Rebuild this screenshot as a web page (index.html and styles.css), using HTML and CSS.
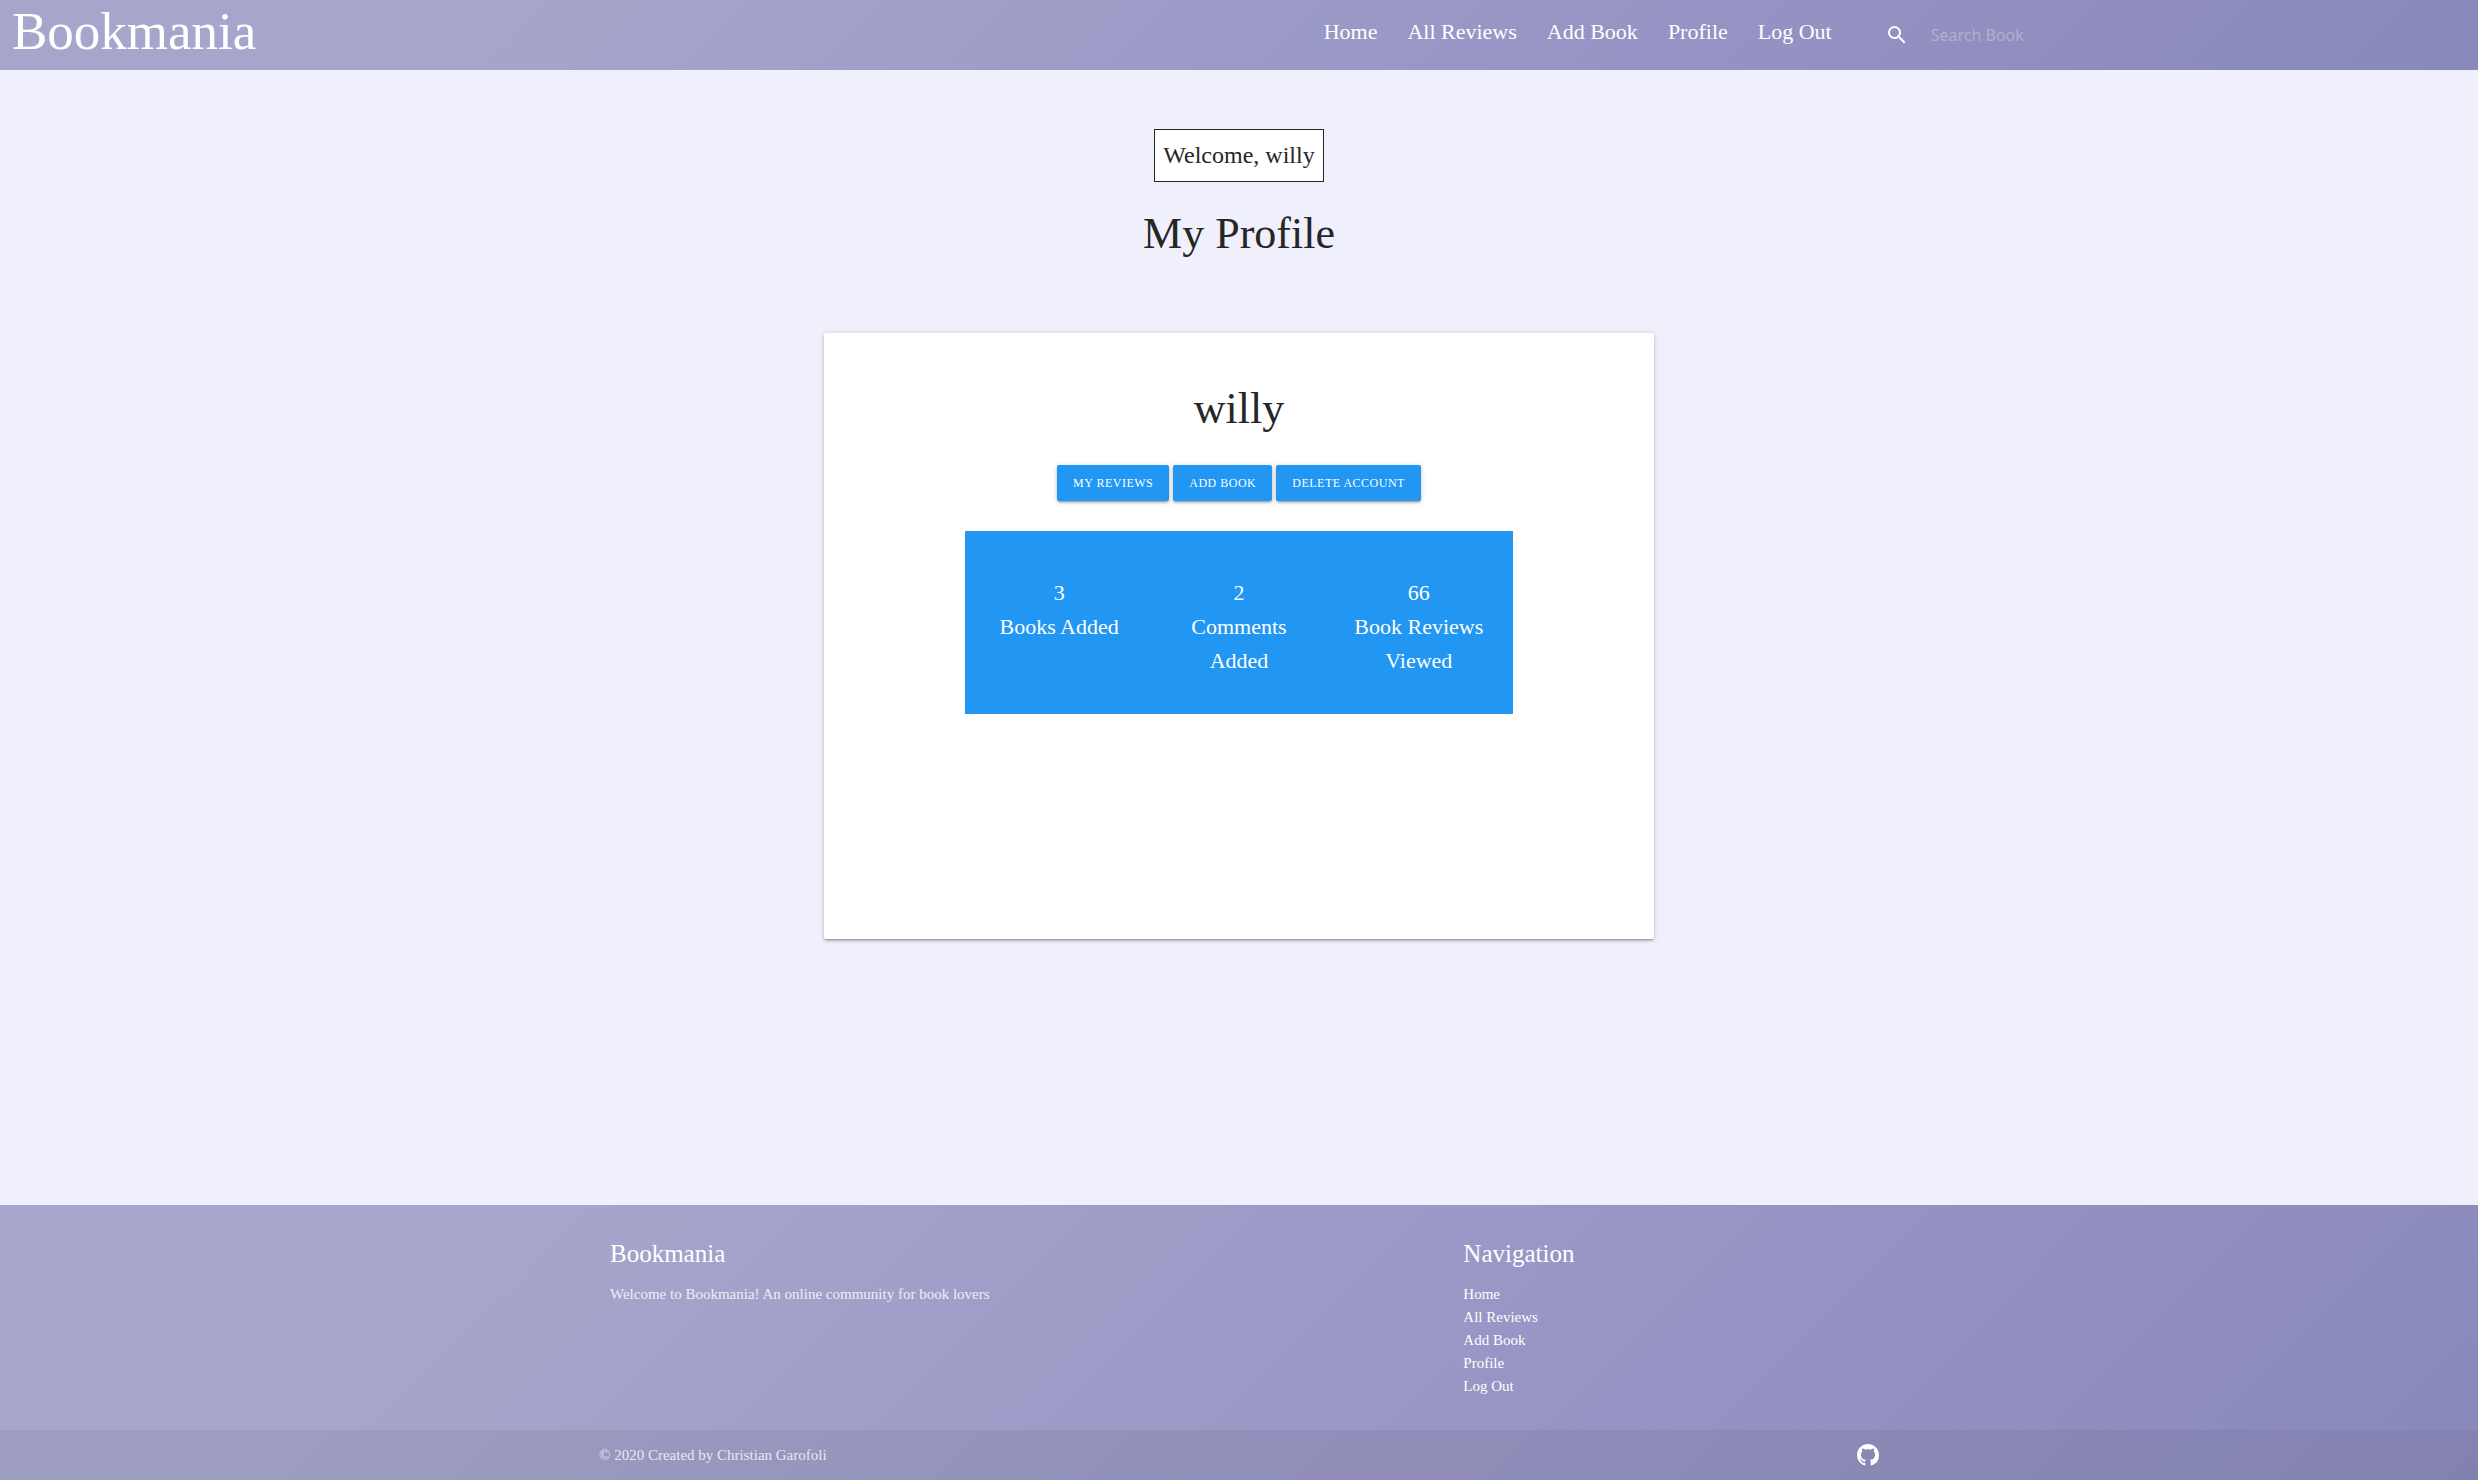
FILE: index.html
```html
<!DOCTYPE html>
<html lang="en">
<head>
<meta charset="utf-8">
<meta name="viewport" content="width=device-width, initial-scale=1">
<title>Bookmania - My Profile</title>
<link rel="stylesheet" href="styles.css">
</head>
<body>
<header class="navbar gradient">
  <a class="brand" href="#">Bookmania</a>
  <nav aria-label="Main">
    <ul class="nav-links">
      <li><a href="#">Home</a></li>
      <li><a href="#">All Reviews</a></li>
      <li><a href="#">Add Book</a></li>
      <li><a href="#">Profile</a></li>
      <li><a href="#">Log Out</a></li>
    </ul>
  </nav>
  <form class="search" role="search">
    <label for="search" aria-label="Search Book">
      <svg class="search-icon" viewBox="0 0 24 24" aria-hidden="true"><path d="M15.5 14h-.79l-.28-.27A6.47 6.47 0 0 0 16 9.5 6.5 6.5 0 1 0 9.500 16c1.610 0 3.090-.59 4.230-1.570l.27.28v.79l5 4.990L20.490 19l-4.990-5zm-6 0C7.010 14 5 11.990 5 9.500S7.010 5 9.500 5 14 7.010 14 9.500 11.990 14 9.500 14z"/></svg>
    </label>
    <input id="search" type="search" placeholder="Search Book">
  </form>
</header>

<main>
  <p class="welcome">Welcome, willy</p>
  <h1 class="title">My Profile</h1>
  <section class="card">
    <h2 class="title">willy</h2>
    <div class="actions">
      <button class="btn" type="button">My Reviews</button>
      <button class="btn" type="button">Add Book</button>
      <button class="btn" type="button">Delete Account</button>
    </div>
    <div class="stats">
      <p>3<br>Books Added</p>
      <p>2<br>Comments Added</p>
      <p>66<br>Book Reviews Viewed</p>
    </div>
  </section>
</main>

<footer class="gradient">
  <div class="container footer-columns">
    <section class="about">
      <h3>Bookmania</h3>
      <p>Welcome to Bookmania! An online community for book lovers</p>
    </section>
    <section class="sitemap">
      <h3>Navigation</h3>
      <ul>
        <li><a href="#">Home</a></li>
        <li><a href="#">All Reviews</a></li>
        <li><a href="#">Add Book</a></li>
        <li><a href="#">Profile</a></li>
        <li><a href="#">Log Out</a></li>
      </ul>
    </section>
  </div>
  <div class="copyright">
    <div class="container copyright-row">
      <span>© 2020 Created by Christian Garofoli</span>
      <a href="#" aria-label="GitHub"><svg class="github" viewBox="0 0 16 16" aria-hidden="true"><path d="M8 0C3.580 0 0 3.580 0 8c0 3.540 2.290 6.530 5.470 7.590.4.070.55-.17.55-.38 0-.19-.01-.82-.01-1.490-2.010.37-2.530-.49-2.690-.94-.09-.23-.48-.94-.82-1.130-.28-.15-.68-.52-.01-.53.63-.01 1.080.58 1.230.82.72 1.210 1.870.87 2.330.66.070-.52.28-.87.51-1.070-1.780-.2-3.640-.89-3.640-3.950 0-.87.31-1.590.82-2.150-.08-.2-.36-1.020.080-2.120 0 0 .67-.21 2.200.82.64-.18 1.320-.27 2-.27s1.360.09 2 .27c1.530-1.040 2.200-.82 2.200-.82.44 1.100.16 1.920.08 2.120.51.56.82 1.270.82 2.150 0 3.070-1.870 3.750-3.650 3.950.29.25.54.73.54 1.480 0 1.070-.01 1.930-.01 2.200 0 .21.15.46.55.38A8.010 8.010 0 0 0 16 8c0-4.420-3.580-8-8-8z"/></svg></a>
    </div>
  </div>
</footer>
</body>
</html>
```
FILE: styles.css
```css
* {
  box-sizing: border-box;
}

body {
  margin: 0;
  min-height: 100vh;
  display: flex;
  flex-direction: column;
  background: #f0f0fd;
  color: #262626;
  font: 15px/23px "Gentium Book Basic", "Liberation Serif", serif;
}

h1, h2, h3, p, ul {
  margin: 0;
  padding: 0;
  font-weight: 400;
}

ul {
  list-style: none;
}

a {
  color: inherit;
  text-decoration: none;
}

.gradient {
  background: linear-gradient(135deg, #a6a6cc 20%, #9896c5 60%, #8988bb 100%);
  color: #fff;
}

.navbar {
  display: flex;
  align-items: flex-start;
  height: 70px;
  padding-left: 12px;
}

.brand {
  font-size: 53px;
  line-height: 62px;
}

.navbar nav {
  margin-left: auto;
}

.nav-links {
  display: flex;
  font-size: 22px;
  line-height: 64px;
}

.nav-links a {
  display: block;
  padding: 0 15px;
}

.search {
  flex: 0 0 25.6%;
  display: flex;
  align-items: center;
  gap: 22px;
  height: 70px;
  padding-left: 38px;
}

.search label {
  display: flex;
}

.search-icon {
  width: 24px;
  height: 24px;
  fill: #fff;
}

.search input {
  flex: 1;
  min-width: 0;
  padding: 0;
  border: 0;
  outline: 0;
  background: none;
  color: #fff;
  font: 16px/24px "Noto Sans", sans-serif;
}

.search input::placeholder {
  color: #b0b0cc;
  opacity: 1;
}

main {
  flex: 1;
  display: flex;
  flex-direction: column;
  align-items: center;
  padding: 59px 0 40px;
}

.welcome {
  padding: 8px;
  border: 1px solid #262626;
  background: #fff;
  font-size: 24px;
  line-height: 35px;
}

.title {
  margin: 28px 0 16px;
  font-size: 44px;
  line-height: 48px;
}

.card {
  width: 65%;
  max-width: 830px;
  min-height: 606px;
  margin-top: 59px;
  padding: 24px;
  border-radius: 2px;
  background: #fff;
  box-shadow: 0 2px 2px 0 rgba(0, 0, 0, .14), 0 3px 1px -2px rgba(0, 0, 0, .12), 0 1px 5px 0 rgba(0, 0, 0, .2);
  text-align: center;
}

.actions {
  display: flex;
  flex-wrap: wrap;
  justify-content: center;
  gap: 4px;
  margin-top: 32px;
}

.btn {
  height: 36px;
  padding: 0 16px;
  border: 0;
  border-radius: 2px;
  background: #2196f3;
  box-shadow: 0 2px 2px 0 rgba(0, 0, 0, .14), 0 3px 1px -2px rgba(0, 0, 0, .12), 0 1px 5px 0 rgba(0, 0, 0, .2);
  color: #fff;
  font: 12px/36px "Gentium Book Basic", "Liberation Serif", serif;
  letter-spacing: .5px;
  text-transform: uppercase;
}

.stats {
  display: grid;
  grid-template-columns: repeat(3, 1fr);
  width: 70%;
  margin: 30px auto 0;
  padding: 45px 4px 36px;
  background: #2196f3;
  color: #fff;
  font-size: 22px;
  line-height: 34px;
}

.stats p {
  padding: 0 24px;
}

.container {
  width: 70%;
  max-width: 1280px;
  margin: 0 auto;
}

.footer-columns {
  display: grid;
  grid-template-columns: 2fr 1fr;
  padding: 32px 0;
}

.footer-columns section {
  padding: 0 11px;
}

.footer-columns h3 {
  margin-bottom: 12px;
  font-size: 25px;
  line-height: 34px;
}

.about p {
  color: #eeeef6;
}

.copyright {
  background: rgba(51, 51, 51, .08);
  color: rgba(255, 255, 255, .8);
}

.copyright-row {
  display: flex;
  align-items: center;
  justify-content: space-between;
  min-height: 50px;
}

.copyright-row a {
  display: flex;
}

.github {
  width: 22px;
  height: 22px;
  fill: #fff;
}
```
